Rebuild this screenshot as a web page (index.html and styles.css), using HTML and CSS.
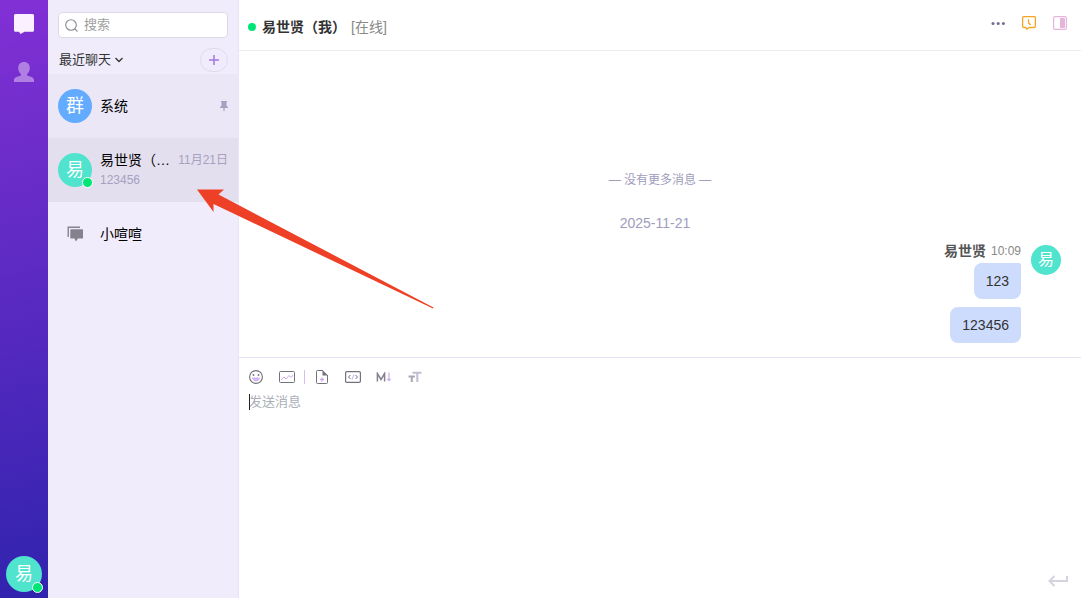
FILE: index.html
```html
<!DOCTYPE html>
<html lang="zh-CN">
<head>
    <meta charset="UTF-8">
    <meta name="viewport" content="width=device-width, initial-scale=1.0">
    <title>喧喧</title>
    <link rel="stylesheet" href="styles.css">
</head>
<body>
    <div class="app">
        <nav class="rail">
            <button class="rail-btn active" type="button" aria-label="聊天">
                <svg width="20" height="20" viewBox="0 0 20 20"><path d="M1.500 0h17A1.500 1.500 0 0 1 20 1.500v14.700a1.500 1.500 0 0 1-1.500 1.500H10.500L6.500 20 5 17.700H1.500A1.500 1.500 0 0 1 0 16.200V1.500A1.500 1.500 0 0 1 1.500 0z" fill="currentColor"/></svg>
            </button>
            <button class="rail-btn" type="button" aria-label="联系人">
                <svg width="20" height="20" viewBox="0 0 20 20"><path d="M10 0c3.700 0 5.800 2.500 5.800 6 0 2.600-1.100 4.700-2.800 6v1.300c1.500 1.200 7 1.500 7 4.700v2H0v-2c0-3.200 5.500-3.500 7-4.700V12c-1.700-1.300-2.800-3.400-2.800-6C4.200 2.500 6.300 0 10 0z" fill="currentColor"/></svg>
            </button>
            <button class="avatar avatar-lg rail-user" type="button">易<span class="status"></span></button>
        </nav>

        <aside class="sidebar">
            <label class="search">
                <svg width="13" height="13" viewBox="0 0 13 13" fill="none" stroke="#8b8b96" stroke-width="1.100"><circle cx="6" cy="6" r="5.300"/><path d="M9.800 9.800l2.700 2.700"/></svg>
                <input type="text" placeholder="搜索">
            </label>
            <div class="sidebar-bar">
                <button class="filter" type="button">最近聊天<svg width="10" height="6" viewBox="0 0 10 6" fill="none" stroke="#333" stroke-width="1.300"><path d="M1.500 1L5 4.500 8.500 1"/></svg></button>
                <button class="add" type="button" aria-label="添加">
                    <svg width="10" height="10" viewBox="0 0 10 10" stroke="#a178e0" stroke-width="1.500"><path d="M0 5h10M5 0v10"/></svg>
                </button>
            </div>
            <ul class="chats">
                <li class="chat pinned">
                    <span class="avatar group">群</span>
                    <div class="chat-body"><div class="chat-line">
                        <span class="chat-name">系统</span>
                        <svg class="pin" width="8" height="12" viewBox="0 0 8 12"><path d="M1 1h6v1L6.500 2.500V6L8 7v1H4.600v2.500L4 11.500l-.600-1V8H0V7l1.500-1V2.500L1 2z" fill="#a5a0c0"/></svg>
                    </div></div>
                </li>
                <li class="chat selected">
                    <span class="avatar">易<span class="status"></span></span>
                    <div class="chat-body">
                        <div class="chat-line">
                            <span class="chat-name">易世贤（我）</span>
                            <time class="chat-date">11月21日</time>
                        </div>
                        <div class="chat-last">123456</div>
                    </div>
                </li>
                <li class="chat">
                    <span class="chat-icon"><svg width="16" height="16" viewBox="0 0 16 16"><path d="M1.200 11V1.200H13" fill="none" stroke="#85828e" stroke-width="1.400"/><path d="M4 3.200h11.300a.700.700 0 0 1 .700.700v8a.700.700 0 0 1-.700.700H11L8.800 15.500 7.500 12.600H4a.700.700 0 0 1-.700-.700v-8A.700.700 0 0 1 4 3.200z" fill="#85828e"/></svg></span>
                    <div class="chat-body"><div class="chat-line"><span class="chat-name">小喧喧</span></div></div>
                </li>
            </ul>
        </aside>

        <main class="main">
            <header class="header">
                <span class="online-dot"></span>
                <h1>易世贤（我）</h1>
                <span class="state">[在线]</span>
                <div class="actions">
                    <button class="icon-btn" type="button" aria-label="更多"><svg width="14" height="14" viewBox="0 0 14 14" fill="#776b93"><circle cx="2" cy="7.500" r="1.500"/><circle cx="7.200" cy="7.500" r="1.500"/><circle cx="12.400" cy="7.500" r="1.500"/></svg></button>
                    <button class="icon-btn" type="button" aria-label="历史"><svg width="14" height="14" viewBox="0 0 14 14" fill="none" stroke="#f5a524" stroke-width="1.300"><path d="M1.600.700h10.800a1 1 0 0 1 1 1v8.800a1 1 0 0 1-1 1H7.500L4.700 13.100 3.700 11.500H1.600a1 1 0 0 1-1-1V1.700a1 1 0 0 1 1-1z"/><path d="M6.500 3.200v3.600L8.500 9"/></svg></button>
                    <button class="icon-btn" type="button" aria-label="侧栏"><svg width="14" height="14" viewBox="0 0 14 14"><rect x=".600" y=".600" width="12.800" height="12.800" rx="1.500" fill="none" stroke="#e6b3dd" stroke-width="1.200"/><rect x="7" y="2" width="5" height="10" rx=".500" fill="#e6b3dd"/></svg></button>
                </div>
            </header>

            <section class="messages">
                <p class="no-more">— 没有更多消息 —</p>
                <p class="day">2025-11-21</p>
                <div class="message">
                    <div class="message-body">
                        <div class="message-head"><strong>易世贤</strong><time>10:09</time></div>
                        <div class="bubble">123</div>
                        <div class="bubble">123456</div>
                    </div>
                    <span class="avatar avatar-sm">易</span>
                </div>
            </section>

            <section class="composer">
                <div class="toolbar">
                    <button class="icon-btn" type="button" aria-label="表情"><svg width="14" height="14" viewBox="0 0 14 14"><circle cx="7" cy="7" r="6.400" fill="none" stroke="#73717b" stroke-width="1.100"/><circle cx="4.500" cy="5" r=".900" fill="#73717b"/><circle cx="9.500" cy="5" r=".900" fill="#73717b"/><path d="M3 7.500h8c-.400 5-7.600 5-8 0z" fill="#d3b5f3"/></svg></button>
                    <button class="icon-btn" type="button" aria-label="图片"><svg width="16" height="12" viewBox="0 0 16 12" fill="none"><rect x=".500" y=".500" width="15" height="11" rx="1" stroke="#73717b"/><path d="M2 9l3-3 2 2 3-3.500 2 2L14 4" stroke="#cda9f0"/></svg></button>
                    <span class="divider"></span>
                    <button class="icon-btn" type="button" aria-label="文件"><svg width="12" height="14" viewBox="0 0 12 14" fill="none"><path d="M7 .500H1.500a1 1 0 0 0-1 1v11a1 1 0 0 0 1 1h9a1 1 0 0 0 1-1V5" stroke="#73717b"/><path d="M6.500 0L12 5.500H6.500z" fill="#73717b"/><path d="M6 7.500v4M4 9.500h4" stroke="#cda9f0" stroke-width="1.300"/></svg></button>
                    <button class="icon-btn" type="button" aria-label="代码"><svg width="16" height="12" viewBox="0 0 16 12" fill="none"><rect x=".600" y=".600" width="14.800" height="10.800" rx="1.200" stroke="#73717b" stroke-width="1.200"/><path d="M5.500 4L3.500 6l2 2M10.500 4l2 2-2 2" stroke="#73717b"/><path d="M9 3.500l-2 5" stroke="#cda9f0"/></svg></button>
                    <button class="icon-btn" type="button" aria-label="Markdown"><svg width="16" height="10" viewBox="0 0 16 10" fill="none"><path d="M1.400 9.500V1.500L5 7.500l3.600-6v8" stroke="#85828e" stroke-width="1.500"/><path d="M13 .500V9M11.300 6.800L13 8.700l1.700-1.900" stroke="#cda9f0" stroke-width="1.200"/></svg></button>
                    <button class="icon-btn" type="button" aria-label="字号"><svg width="14" height="12" viewBox="0 0 14 12" fill="none" stroke-width="2"><path d="M4.500 1.800H13.500M9.300 1.800V11" stroke="#c3bdd2"/><path d="M.500 5.500h6.500M3.800 5.500v5.500" stroke="#aaa6b5"/></svg></button>
                </div>
                <div class="editor">
                    <textarea placeholder="发送消息" aria-label="发送消息"></textarea>
                    <span class="caret"></span>
                </div>
                <button class="send" type="button" aria-label="发送"><svg width="20" height="12" viewBox="0 0 20 12" fill="none" stroke="#d5d3df" stroke-width="2"><path d="M19 1v5H1.500M6.500 1l-5 5 5 5"/></svg></button>
            </section>
        </main>

        <svg class="pointer" width="237" height="120" viewBox="0 0 237 120"><path d="M0 .500H27L21.500 5.500 236.500 118.500 236 119.500 16.500 15V23z" fill="#ee4026"/></svg>
    </div>
</body>
</html>
```
FILE: styles.css
```css
* {
    box-sizing: border-box;
}

body {
    margin: 0;
    font-family: "Liberation Sans", "Noto Sans CJK SC", sans-serif;
    font-size: 14px;
    line-height: 20px;
    color: #333;
}

button {
    padding: 0;
    border: none;
    background: none;
    font: inherit;
    color: inherit;
    cursor: pointer;
}

svg {
    display: block;
    flex: none;
}

.app {
    position: relative;
    display: flex;
    height: 100vh;
    overflow: hidden;
}

/* left rail */
.rail {
    width: 48px;
    flex: none;
    display: flex;
    flex-direction: column;
    align-items: center;
    padding: 0 6px 6px;
    background: linear-gradient(165deg, #8230d5 0%, #3023ae 100%);
}

.rail-btn {
    width: 36px;
    height: 48px;
    display: flex;
    align-items: center;
    justify-content: center;
    color: #b07fe2;
}

.rail-btn.active {
    color: #fbf0ff;
}

.rail-user {
    margin-top: auto;
}

.avatar {
    position: relative;
    width: 34px;
    height: 34px;
    flex: none;
    display: flex;
    align-items: center;
    justify-content: center;
    border-radius: 50%;
    background: #50e3cd;
    color: #fff;
    font-size: 18px;
}

.avatar.group {
    background: #63abff;
}

.avatar-lg {
    width: 36px;
    height: 36px;
    font-size: 18px;
}

.avatar-sm {
    width: 30px;
    height: 30px;
    font-size: 16px;
}

.status {
    position: absolute;
    right: -1px;
    bottom: -1px;
    width: 11px;
    height: 11px;
    border: 1px solid #fff;
    border-radius: 50%;
    background: #00e676;
}

/* chat list */
.sidebar {
    width: 191px;
    flex: none;
    padding-top: 12px;
    background: #f0ecfc;
    border-right: 1px solid #e8e4f6;
}

.search {
    display: flex;
    align-items: center;
    gap: 6px;
    height: 26px;
    margin: 0 10px;
    padding: 0 6px;
    background: #fff;
    border: 1px solid #dddae6;
    border-radius: 4px;
}

.search input {
    width: 100%;
    min-width: 0;
    padding: 0;
    border: none;
    outline: none;
    background: none;
    font: inherit;
    font-size: 13px;
}

.search input::placeholder {
    color: #a0a0a0;
}

.sidebar-bar {
    display: flex;
    align-items: center;
    justify-content: space-between;
    height: 36px;
    padding: 8px 10px 0 11px;
}

.filter {
    display: flex;
    align-items: center;
    gap: 3px;
    font-size: 13px;
}

.add {
    width: 28px;
    height: 24px;
    display: flex;
    align-items: center;
    justify-content: center;
    border: 1px solid #e0dcec;
    border-radius: 12px;
}

.chats {
    margin: 0;
    padding: 0;
    list-style: none;
}

.chat {
    display: flex;
    align-items: center;
    gap: 8px;
    height: 64px;
    padding: 0 10px;
    color: #000;
}

.chat.pinned {
    background: #ebe7f6;
}

.chat.selected {
    background: #e3dfee;
}

.chat-icon {
    width: 34px;
    display: flex;
    justify-content: center;
}

.chat-body {
    flex: 1;
    min-width: 0;
}

.chat-line {
    display: flex;
    align-items: center;
    justify-content: space-between;
    gap: 8px;
}

.chat-name {
    overflow: hidden;
    white-space: nowrap;
    text-overflow: ellipsis;
}

.chat-date,
.chat-last {
    flex: none;
    font-size: 12px;
    color: #a6a1c0;
}

/* conversation */
.main {
    flex: 1;
    min-width: 0;
    display: flex;
    flex-direction: column;
}

.header {
    display: flex;
    align-items: center;
    height: 51px;
    flex: none;
    padding: 4px 14px 0 9px;
    border-bottom: 1px solid #ececf2;
}

.online-dot {
    width: 8px;
    height: 8px;
    margin-right: 6px;
    border-radius: 50%;
    background: #00e676;
}

.header h1 {
    margin: 0;
    font-size: 14px;
}

.state {
    margin-left: 5px;
    color: #888;
}

.actions {
    display: flex;
    gap: 17px;
    margin-left: auto;
    padding-bottom: 8px;
}

.messages {
    flex: 1;
    min-height: 0;
    display: flex;
    flex-direction: column;
    justify-content: flex-end;
    padding: 0 20px 14px;
    overflow: hidden;
}

.no-more,
.day {
    margin: 0;
    text-align: center;
    color: #a09cbc;
}

.no-more {
    margin-bottom: 23px;
    font-size: 12px;
}

.day {
    margin-bottom: 8px;
    padding-right: 10px;
}

.message {
    display: flex;
    justify-content: flex-end;
    gap: 10px;
    padding-top: 4px;
}

.message-body {
    display: flex;
    flex-direction: column;
    align-items: flex-end;
    gap: 8px;
}

.message-head {
    display: flex;
    gap: 5px;
    margin: -4px 0 -6px;
    color: #555;
}

.message-head time {
    font-size: 12px;
    color: #888;
}

.bubble {
    padding: 8px 12px;
    background: #cddcfd;
    border-radius: 8px 2px 8px 8px;
}

/* message input */
.composer {
    position: relative;
    height: 241px;
    flex: none;
    display: flex;
    flex-direction: column;
    padding: 9px 10px;
    border-top: 1px solid #e6e4f2;
}

.toolbar {
    display: flex;
    align-items: center;
    height: 20px;
}

.icon-btn {
    display: flex;
    align-items: center;
    justify-content: center;
}

.toolbar .icon-btn {
    width: 14px;
    margin-right: 17px;
}

.toolbar .divider {
    width: 1px;
    height: 14px;
    margin: 0 10px 0 -7px;
    background: #d5bdf0;
}

.editor {
    position: relative;
    flex: 1;
    display: flex;
    padding-top: 5px;
}

.editor textarea {
    flex: 1;
    padding: 0;
    border: none;
    outline: none;
    resize: none;
    background: none;
    font: inherit;
    font-size: 13px;
}

.editor textarea::placeholder {
    color: #aaafb8;
}

.caret {
    position: absolute;
    top: 7px;
    left: 0;
    width: 1px;
    height: 16px;
    background: #222;
}

.send {
    position: absolute;
    right: 13px;
    bottom: 11px;
}

/* red arrow over the page */
.pointer {
    position: absolute;
    top: 189px;
    left: 197px;
    pointer-events: none;
}
```
